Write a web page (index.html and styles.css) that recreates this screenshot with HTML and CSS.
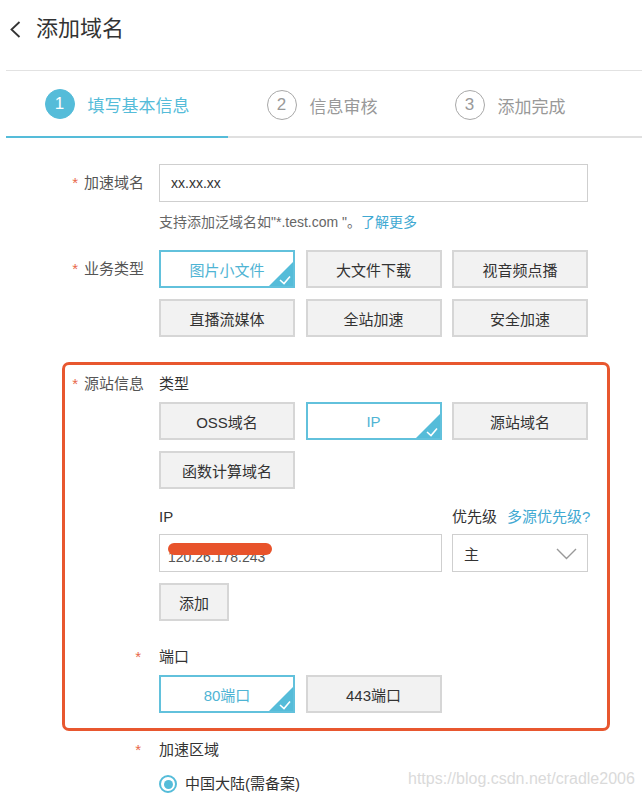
FILE: index.html
```html
<!DOCTYPE html>
<html lang="zh-CN">
<head>
<meta charset="utf-8">
<title>添加域名</title>
<link rel="stylesheet" href="styles.css">
</head>
<body>
<div class="page">
  <header class="header">
    <svg class="back" width="12" height="17" viewBox="0 0 12 17"><polyline points="10.5,1 2.5,8.5 10.5,16" fill="none" stroke="#333" stroke-width="1.8"/></svg>
    <h1 class="title">添加域名</h1>
  </header>

  <nav class="steps">
    <div class="step active"><span class="num">1</span><span class="step-label">填写基本信息</span></div>
    <div class="step"><span class="num">2</span><span class="step-label">信息审核</span></div>
    <div class="step"><span class="num">3</span><span class="step-label">添加完成</span></div>
  </nav>

  <div class="form">
    <div class="row row-domain">
      <div class="lbl"><span class="req">*</span>加速域名</div>
      <div class="ctl">
        <div class="input">xx.xx.xx</div>
        <p class="hint">支持添加泛域名如"*.test.com "。<span class="link">了解更多</span></p>
      </div>
    </div>

    <div class="row row-biz">
      <div class="lbl"><span class="req">*</span>业务类型</div>
      <div class="ctl opts">
        <div class="btn on">图片小文件<svg class="tick" width="26" height="26" viewBox="0 0 26 26"><polygon points="26,0 26,26 0,26" fill="#55bcd9"/><polyline points="12,19 16,22.5 22,15.5" fill="none" stroke="#fff" stroke-width="1.6"/></svg></div>
        <div class="btn">大文件下载</div>
        <div class="btn">视音频点播</div>
        <div class="btn">直播流媒体</div>
        <div class="btn">全站加速</div>
        <div class="btn">安全加速</div>
      </div>
    </div>

    <div class="box">
      <div class="row row-src">
        <div class="lbl lbl-line"><span class="req">*</span>源站信息</div>
        <div class="ctl">
          <div class="sub">类型</div>
          <div class="opts opts-type">
            <div class="btn">OSS域名</div>
            <div class="btn on">IP<svg class="tick" width="26" height="26" viewBox="0 0 26 26"><polygon points="26,0 26,26 0,26" fill="#55bcd9"/><polyline points="12,19 16,22.5 22,15.5" fill="none" stroke="#fff" stroke-width="1.6"/></svg></div>
            <div class="btn">源站域名</div>
            <div class="btn">函数计算域名</div>
          </div>
          <div class="opts ip-head">
            <div class="sub">IP</div>
            <div class="sub prio">优先级<span class="link">多源优先级?</span></div>
          </div>
          <div class="opts ip-fields">
            <div class="input ip-input"><span class="ip-text">120.26.178.243</span><span class="redact"></span></div>
            <div class="input select">主<svg class="chev" width="21" height="12" viewBox="0 0 21 12"><polyline points="1,1 10.5,10.5 20,1" fill="none" stroke="#999" stroke-width="1.4"/></svg></div>
          </div>
          <div class="btn add">添加</div>
        </div>
      </div>

      <div class="row row-port">
        <div class="lbl lbl-line"><span class="req solo">*</span></div>
        <div class="ctl">
          <div class="sub">端口</div>
          <div class="opts opts-port">
            <div class="btn on">80端口<svg class="tick" width="26" height="26" viewBox="0 0 26 26"><polygon points="26,0 26,26 0,26" fill="#55bcd9"/><polyline points="12,19 16,22.5 22,15.5" fill="none" stroke="#fff" stroke-width="1.6"/></svg></div>
            <div class="btn">443端口</div>
          </div>
        </div>
      </div>
    </div>

    <div class="row row-area">
      <div class="lbl lbl-line"><span class="req solo">*</span></div>
      <div class="ctl">
        <div class="sub">加速区域</div>
        <div class="radio"><span class="dot"></span>中国大陆(需备案)</div>
      </div>
    </div>
  </div>

  <div class="watermark">https://blog.csdn.net/cradle2006</div>
</div>
</body>
</html>
```

FILE: styles.css
```css
html, body {
  margin: 0;
  padding: 0;
  background: #fff;
}

.page {
  position: relative;
  width: 642px;
  height: 800px;
  overflow: hidden;
  font-family: "Liberation Sans", "Noto Sans CJK SC", sans-serif;
  color: #333;
}

/* header */
.header {
  height: 70px;
  box-sizing: border-box;
  padding: 16px 0 0 9px;
  display: flex;
  align-items: flex-start;
}
.back {
  margin-top: 5px;
}
.title {
  margin: 0 0 0 15px;
  font-size: 22px;
  line-height: 26px;
  font-weight: normal;
  color: #333;
}

/* steps */
.steps {
  margin-left: 6px;
  height: 68px;
  box-sizing: border-box;
  border-top: 1px solid #e2e2e2;
  border-bottom: 2px solid #e0e0e0;
  display: flex;
}
.step {
  height: 65px;
  box-sizing: border-box;
  padding: 3px 38.5px 0;
  display: flex;
  align-items: center;
  gap: 13px;
}
.step.active {
  border-bottom: 2px solid #55bcd9;
  margin-bottom: -2px;
  height: 67px;
  padding-bottom: 2px;
}
.num {
  width: 30px;
  height: 30px;
  box-sizing: border-box;
  border-radius: 50%;
  border: 1.5px solid #a8a8a8;
  color: #999;
  font-size: 17px;
  display: flex;
  align-items: center;
  justify-content: center;
}
.step.active .num {
  background: #55bcd9;
  border-color: #55bcd9;
  color: #fff;
}
.step-label {
  font-size: 17px;
  color: #999;
}
.step.active .step-label {
  color: #55bcd9;
}

/* form */
.form {
  padding-top: 26px;
}
.row {
  display: grid;
  grid-template-columns: 144px 429px;
  column-gap: 15px;
}
.lbl {
  text-align: right;
  font-size: 15px;
  line-height: 38px;
  color: #555;
  white-space: nowrap;
}
.lbl-line {
  line-height: 20px;
}
.req {
  color: #e8694a;
  font-family: "Liberation Sans", sans-serif;
  margin-right: 6px;
}
.req.solo {
  margin-right: 3px;
}

.input {
  height: 38px;
  box-sizing: border-box;
  border: 1px solid #cfcfcf;
  background: #fff;
  padding-left: 11px;
  display: flex;
  align-items: center;
  font-size: 14px;
  color: #333;
}
.hint {
  margin: 10px 0 0;
  font-size: 14px;
  line-height: 20px;
  color: #666;
}
.link {
  color: #3fa9d2;
}

.row-biz {
  margin-top: 18px;
}
.opts {
  display: grid;
  grid-template-columns: repeat(3, 136px);
  column-gap: 10.5px;
  row-gap: 11px;
}
.btn {
  position: relative;
  height: 38px;
  box-sizing: border-box;
  border: 2px solid #d6d6d6;
  background: #f2f2f2;
  display: flex;
  align-items: center;
  justify-content: center;
  font-size: 15px;
  color: #333;
  overflow: hidden;
}
.btn.on {
  background: #fff;
  border-color: #62c1dc;
  color: #4fb4d4;
}
.tick {
  position: absolute;
  right: -1px;
  bottom: -1px;
}

/* source box */
.box {
  margin-top: 25px;
  margin-left: 62px;
  width: 548px;
  box-sizing: border-box;
  border: 3px solid #e8572f;
  border-radius: 7px;
  padding: 9px 0 15px;
}
.box .row {
  grid-template-columns: 79px 429px;
}
.sub {
  font-size: 15px;
  line-height: 20px;
  color: #333;
  white-space: nowrap;
}
.opts-type {
  margin-top: 8px;
}
.ip-head {
  margin-top: 18px;
}
.prio {
  grid-column: 3;
}
.prio .link {
  margin-left: 10px;
}
.ip-fields {
  margin-top: 7px;
}
.ip-input {
  grid-column: span 2;
  position: relative;
  padding-left: 8px;
}
.ip-text {
  color: #555;
  font-size: 14px;
  padding-top: 8px;
}
.redact {
  position: absolute;
  left: 8px;
  top: 8px;
  width: 104px;
  height: 12px;
  border-radius: 6px;
  background: #e8532b;
}
.select {
  position: relative;
  font-size: 15px;
}
.chev {
  position: absolute;
  right: 10px;
  top: 13px;
}
.btn.add {
  width: 70px;
  margin-top: 11px;
}

.row-port {
  margin-top: 26px;
}
.opts-port {
  margin-top: 8px;
}

.row-area {
  margin-top: 9px;
}
.radio {
  margin-top: 14px;
  display: flex;
  align-items: center;
  gap: 8px;
  font-size: 15px;
  line-height: 20px;
  color: #333;
}
.dot {
  width: 18px;
  height: 18px;
  box-sizing: border-box;
  border: 2px solid #55bcd9;
  border-radius: 50%;
  display: flex;
  align-items: center;
  justify-content: center;
}
.dot::after {
  content: "";
  width: 9px;
  height: 9px;
  border-radius: 50%;
  background: #55bcd9;
}

.watermark {
  position: absolute;
  left: 408px;
  top: 770px;
  font-family: "Liberation Sans", sans-serif;
  font-size: 16px;
  line-height: 18px;
  color: #dadada;
  white-space: nowrap;
}
```
